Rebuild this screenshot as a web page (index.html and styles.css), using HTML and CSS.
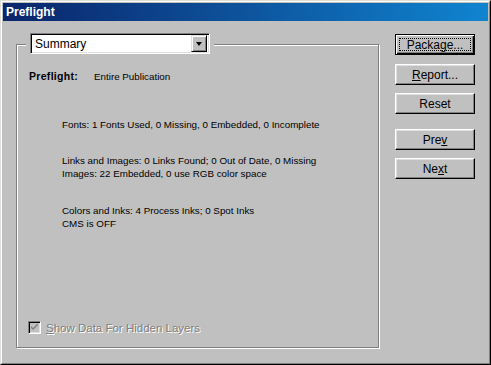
FILE: index.html
```html
<!DOCTYPE html>
<html>
<head>
<meta charset="utf-8">
<link rel="stylesheet" href="styles.css">
</head>
<body>
<div class="window">
  <div class="frame">
    <div class="titlebar">Preflight</div>
    <div class="content">
      <div class="group">
        <div class="legend">
          <div class="select">
            <span class="select-text">Summary</span>
            <span class="arrow-btn"><span class="arrow"></span></span>
          </div>
        </div>
        <div class="row-head"><span class="label">Preflight:</span><span>Entire Publication</span></div>
        <div class="info fonts">Fonts: 1 Fonts Used, 0 Missing, 0 Embedded, 0 Incomplete</div>
        <div class="info links">Links and Images: 0 Links Found; 0 Out of Date, 0 Missing<br>Images: 22 Embedded, 0 use RGB color space</div>
        <div class="info colors">Colors and Inks: 4 Process Inks; 0 Spot Inks<br>CMS is OFF</div>
        <div class="check-row">
          <span class="checkbox"><svg width="7" height="7" viewBox="0 0 7 7"><path d="M0 2 L0 4 L2 6 L7 1 L7 -1 L2 4 Z" fill="#808080"/></svg></span>
          <span class="check-label"><u>S</u>how Data For Hidden Layers</span>
        </div>
      </div>
      <div class="buttons">
        <div class="btn default"><span class="focus">Package...</span></div>
        <div class="btn b-report"><span><u>R</u>eport...</span></div>
        <div class="btn b-reset"><span>Reset</span></div>
        <div class="btn b-prev"><span>Pre<u>v</u></span></div>
        <div class="btn b-next"><span>Ne<u>x</u>t</span></div>
      </div>
    </div>
  </div>
</div>
</body>
</html>
```
FILE: styles.css
```css
html, body { margin: 0; padding: 0; background: #c0c0c0; }
body { font-family: "Liberation Sans", Arial, sans-serif; }

.window {
  width: 491px; height: 365px; box-sizing: border-box;
  border: 1px solid; border-color: #dfdfdf #000 #000 #dfdfdf;
  background: #c0c0c0;
}
.frame {
  height: 100%; box-sizing: border-box;
  border: 1px solid; border-color: #fff #808080 #808080 #fff;
  padding: 1px; display: flex; flex-direction: column;
}
.titlebar {
  height: 18px; flex: none;
  background: linear-gradient(90deg, #0a246a, #1084d0);
  color: #fff; font: bold 12px "Liberation Sans", Arial, sans-serif;
  padding-left: 3px; display: flex; align-items: center;
}
.content { flex: 1; display: flex; padding-left: 13px; }

.group {
  margin-top: 23px; width: 363px; height: 304px; box-sizing: border-box;
  border: 1px solid #808080;
  box-shadow: 1px 1px 0 #fff, inset 1px 1px 0 #fff;
  display: flex; flex-direction: column;
  font-size: 9.8px; color: #000;
}
.legend {
  margin: -12px 0 0 9px; padding: 0 4px;
  background: #c0c0c0; width: fit-content;
}
.select {
  width: 180px; height: 21px; box-sizing: border-box;
  border: 1px solid; border-color: #808080 #fff #fff #808080;
  box-shadow: inset 1px 1px 0 #000, inset -1px -1px 0 #dfdfdf;
  background: #fff; display: flex; align-items: center;
  padding: 2px;
}
.select-text { flex: 1; font-size: 12px; padding-left: 2px; }
.arrow-btn {
  width: 16px; height: 17px; box-sizing: border-box;
  background: #c0c0c0;
  border: 1px solid; border-color: #dfdfdf #000 #000 #dfdfdf;
  box-shadow: inset 1px 1px 0 #fff, inset -1px -1px 0 #808080;
  display: flex; align-items: center; justify-content: center;
}
.arrow {
  width: 0; height: 0;
  border-left: 3.5px solid transparent; border-right: 3.5px solid transparent;
  border-top: 4px solid #000;
}

.row-head { margin: 16px 0 0 12px; line-height: 13px; display: flex; align-items: baseline; }
.label { font-weight: bold; font-size: 10.5px; width: 65px; letter-spacing: 0.3px; }
.info { margin-left: 45px; line-height: 13px; }
.fonts { margin-top: 35px; }
.links { margin-top: 23px; }
.colors { margin-top: 24px; }

.check-row {
  margin: auto 0 13px 11px; display: flex; align-items: center;
  font-size: 11.5px;
}
.checkbox {
  width: 13px; height: 13px; box-sizing: border-box;
  border: 1px solid; border-color: #808080 #fff #fff #808080;
  box-shadow: inset 1px 1px 0 #000, inset -1px -1px 0 #dfdfdf;
  background: #c0c0c0; display: flex; align-items: center; justify-content: center;
}
.check-label { margin-left: 5px; color: #808080; text-shadow: 1px 1px 0 #fff; }

.buttons { margin-left: 16px; padding-top: 13px; display: flex; flex-direction: column; }
.btn {
  width: 80px; height: 21px; box-sizing: border-box;
  border: 1px solid; border-color: #fff #000 #000 #fff;
  box-shadow: inset -1px -1px 0 #808080, inset 1px 1px 0 #dfdfdf;
  display: flex; align-items: center; justify-content: center;
  font-size: 12px; color: #000;
}
.btn.default {
  border: 1px solid #000;
  box-shadow: inset 1px 1px 0 #fff, inset -1px -1px 0 #000, inset -2px -2px 0 #808080;
  padding: 3px;
}
.focus {
  flex: 1; align-self: stretch; outline: 1px dotted #000; outline-offset: -1px;
  display: flex; align-items: center; justify-content: center;
}
.b-report { margin-top: 9px; }
.b-reset { margin-top: 8px; }
.b-prev { margin-top: 15px; }
.b-next { margin-top: 8px; }
```
